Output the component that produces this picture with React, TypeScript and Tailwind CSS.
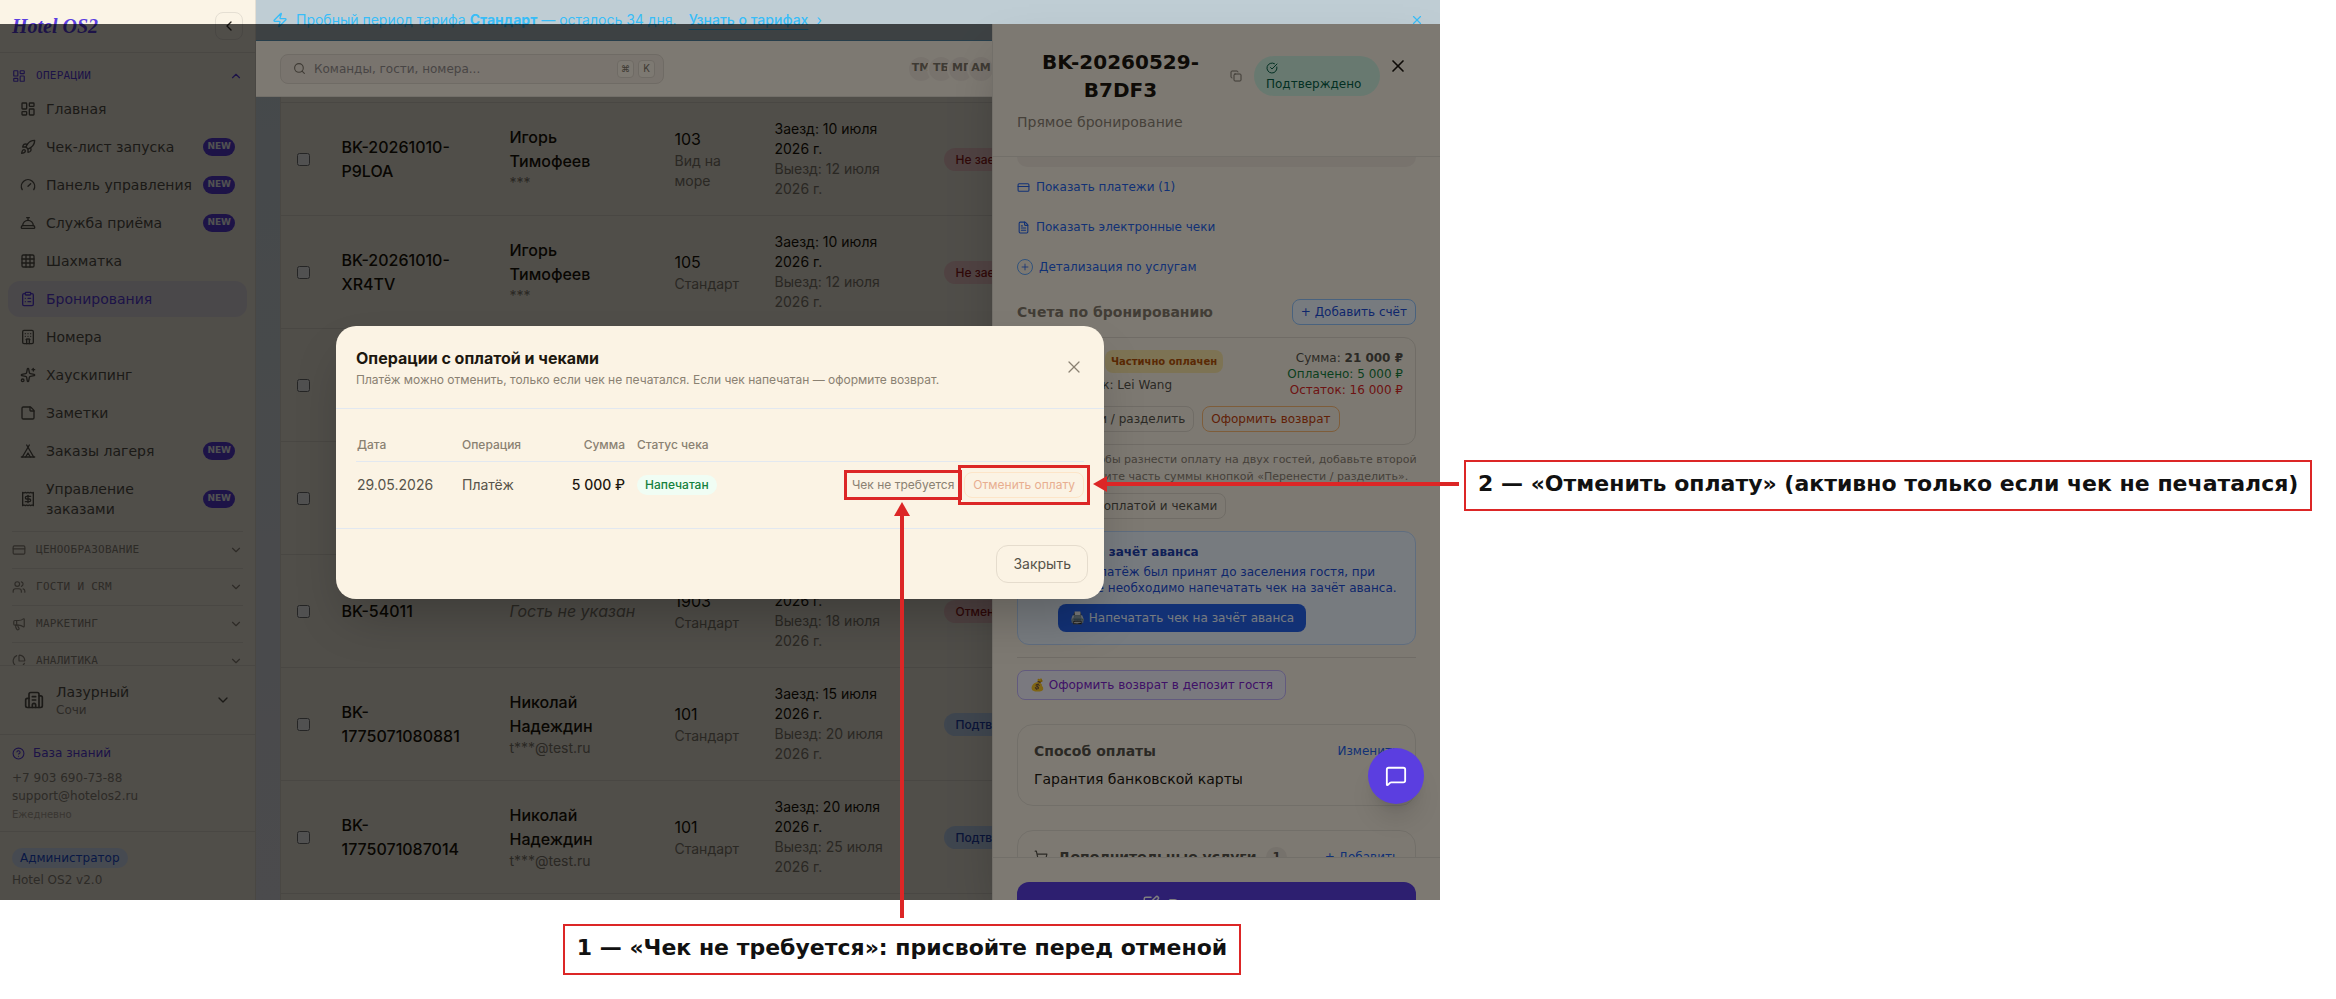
import type { ReactNode } from "react";
import {
  Building2,
  CalendarDays,
  ChartPie,
  ChevronDown,
  ChevronLeft,
  ChevronUp,
  CircleCheckBig,
  CircleHelp,
  ClipboardList,
  ConciergeBell,
  Copy,
  CreditCard,
  FileText,
  Gauge,
  Grid3x3,
  Hotel,
  LayoutDashboard,
  Megaphone,
  MessageSquare,
  Plus,
  Receipt,
  Rocket,
  Search,
  ShoppingCart,
  Sparkles,
  SquarePen,
  StickyNote,
  Tent,
  Users,
  X,
  Zap,
} from "lucide-react";

const navItems = [
  { label: "Главная", icon: LayoutDashboard },
  { label: "Чек-лист запуска", icon: Rocket, isNew: true },
  { label: "Панель управления", icon: Gauge, isNew: true },
  { label: "Служба приёма", icon: ConciergeBell, isNew: true },
  { label: "Шахматка", icon: Grid3x3 },
  { label: "Бронирования", icon: ClipboardList, active: true },
  { label: "Номера", icon: Hotel },
  { label: "Хаускипинг", icon: Sparkles },
  { label: "Заметки", icon: StickyNote },
  { label: "Заказы лагеря", icon: Tent, isNew: true },
  { label: "Управление заказами", icon: Receipt, isNew: true },
];

const sections = [
  { label: "ЦЕНООБРАЗОВАНИЕ", icon: CreditCard },
  { label: "ГОСТИ И CRM", icon: Users },
  { label: "МАРКЕТИНГ", icon: Megaphone },
  { label: "АНАЛИТИКА", icon: ChartPie },
];

type Booking = {
  id: string;
  guest?: string;
  contact?: string;
  room?: string;
  category?: string;
  from?: string;
  to?: string;
  status?: string;
  tone?: "red" | "blue";
};

const bookings: Booking[] = [
  { id: "BK-20261010-P9LOA", guest: "Игорь Тимофеев", contact: "***", room: "103", category: "Вид на море", from: "10 июля", to: "12 июля", status: "Не заехал", tone: "red" },
  { id: "BK-20261010-XR4TV", guest: "Игорь Тимофеев", contact: "***", room: "105", category: "Стандарт", from: "10 июля", to: "12 июля", status: "Не заехал", tone: "red" },
  { id: "" },
  { id: "" },
  { id: "BK-54011", room: "1903", category: "Стандарт", from: "16 июля", to: "18 июля", status: "Отменено", tone: "red" },
  { id: "BK-1775071080881", guest: "Николай Надеждин", contact: "t***@test.ru", room: "101", category: "Стандарт", from: "15 июля", to: "20 июля", status: "Подтверждено", tone: "blue" },
  { id: "BK-1775071087014", guest: "Николай Надеждин", contact: "t***@test.ru", room: "101", category: "Стандарт", from: "20 июля", to: "25 июля", status: "Подтверждено", tone: "blue" },
  { id: "" },
];

function Sidebar() {
  return (
    <aside className="flex w-64 shrink-0 flex-col border-r border-[#e5dfd3] bg-[#fbf4e6] text-[#57534a]">
      <div className="flex h-[53px] shrink-0 items-center justify-between border-b border-[#e5dfd3] px-3">
        <span className="font-['Liberation_Serif',serif] text-xl font-bold italic text-[#5b3ee0]">Hotel OS2</span>
        <button type="button" aria-label="Свернуть меню" className="flex size-7 items-center justify-center rounded-lg border border-[#e5dfd3] text-[#2b2720]">
          <ChevronLeft size={16} />
        </button>
      </div>

      <nav className="min-h-0 flex-1 overflow-hidden pt-2">
        <button type="button" className="flex h-[30px] w-full items-center gap-2.5 px-3 font-['DejaVu_Sans_Mono',monospace] text-[11px] tracking-wide text-[#5b3ee0]">
          <LayoutDashboard size={14} />
          ОПЕРАЦИИ
          <ChevronUp size={14} className="ml-auto" />
        </button>
        <ul className="flex flex-col gap-0.5 px-2">
          {navItems.map(({ label, icon: Icon, isNew, active }) => (
            <li key={label}>
              <a
                href="#"
                className={`flex items-center gap-2.5 rounded-xl px-3 py-2 text-sm leading-5 ${active ? "bg-[#e9e1ea] text-[#5b3ee0]" : ""}`}
              >
                <Icon size={16} className="shrink-0" />
                <span className="flex-1">{label}</span>
                {isNew && (
                  <span className="h-[18px] rounded-full bg-[#5b3ee0] px-1 text-[9px] leading-4 font-bold text-white">NEW</span>
                )}
              </a>
            </li>
          ))}
        </ul>
        <div className="mx-3 mt-1">
          {sections.map(({ label, icon: Icon }) => (
            <button
              key={label}
              type="button"
              className="flex h-[37px] w-full items-center gap-2.5 border-t border-[#e5dfd3] font-['DejaVu_Sans_Mono',monospace] text-[11px] tracking-wide text-[#8f877a]"
            >
              <Icon size={14} />
              {label}
              <ChevronDown size={14} className="ml-auto" />
            </button>
          ))}
        </div>
      </nav>

      <div className="flex h-[69px] shrink-0 items-center border-t border-[#e5dfd3] px-6">
        <Building2 size={20} className="mr-3" />
        <div className="flex-1">
          <div className="text-sm leading-5">Лазурный</div>
          <div className="text-xs text-[#8f877a]">Сочи</div>
        </div>
        <ChevronDown size={16} />
      </div>
      <div className="shrink-0 border-t border-[#e5dfd3] px-3 pt-2.5 pb-2 text-xs text-[#8f877a]">
        <a href="#" className="flex items-center gap-2 text-[#5b3ee0]">
          <CircleHelp size={13} />
          База знаний
        </a>
        <a href="#" className="mt-2 block leading-[18px]">+7 903 690-73-88</a>
        <a href="#" className="block leading-[18px]">support@hotelos2.ru</a>
        <div className="mt-0.5 text-[10px] leading-4 text-[#b3aa9b]">Ежедневно</div>
      </div>
      <div className="h-[69px] shrink-0 border-t border-[#e5dfd3] px-3 pt-4 text-xs text-[#8f877a]">
        <span className="inline-block rounded-full bg-[#dbeafe] px-2 py-0.5 text-[#1d4ed8]">Администратор</span>
        <div className="mt-1">Hotel OS2 v2.0</div>
      </div>
    </aside>
  );
}

function TopBar() {
  return (
    <header className="relative z-20 flex h-14 shrink-0 items-center justify-between border-b border-[#e5dfd3] bg-[#fbf3e5] px-6">
      <label className="flex h-[30px] w-full max-w-sm items-center gap-2 rounded-lg border border-[#dfd6ca] bg-[#f2e8dc] px-3 text-[#7d7568]">
        <Search size={13} />
        <input
          type="text"
          aria-label="Поиск"
          placeholder="Команды, гости, номера..."
          className="min-w-0 flex-1 bg-transparent text-xs outline-none placeholder:text-[#918b8a]"
        />
        <kbd className="-mr-1 flex h-[18px] w-[17px] items-center justify-center rounded border border-[#dfd6ca] bg-[#fbf3e5] font-[Inter,sans-serif] text-[9px]">⌘</kbd>
        <kbd className="-mr-1 flex h-[18px] w-[17px] items-center justify-center rounded border border-[#dfd6ca] bg-[#fbf3e5] font-[Inter,sans-serif] text-[10px]">K</kbd>
      </label>
      <div className="mr-[421px] flex">
        {["ТМ", "ТБ", "МГ", "АМ"].map((name) => (
          <span
            key={name}
            className="-ml-2 flex size-7 items-center justify-center rounded-full border-2 border-[#fbf3e5] bg-[#f0e6db] text-[11px] font-bold text-[#7d7568]"
          >
            {name}
          </span>
        ))}
      </div>
    </header>
  );
}

function BookingsTable() {
  return (
    <table className="w-full table-fixed border-x border-[#e5dfd3] bg-[#fbf4e6] font-[Inter,sans-serif] text-sm leading-5 text-[#1a1408]">
      <colgroup>
        <col className="w-[45px]" />
        <col className="w-[168px]" />
        <col className="w-[165px]" />
        <col className="w-[100px]" />
        <col className="w-[161px]" />
        <col />
      </colgroup>
      <tbody>
        {bookings.map((b, i) => (
          <tr key={i} className="h-[113px] border-t border-[#e5dfd3]">
            <td className="pl-4">
              <input type="checkbox" aria-label={`Выбрать ${b.id}`} className="block size-[13px]" />
            </td>
            <td className="px-4 text-base leading-6 font-medium">{b.id}</td>
            <td className="px-4">
              {b.guest && (
                <>
                  <div className="w-24 text-base leading-6 font-medium">{b.guest}</div>
                  <div className="text-[#857d70]">{b.contact}</div>
                </>
              )}
              {b.id && !b.guest && <div className="text-base leading-6 whitespace-nowrap text-[#857d70] italic">Гость не указан</div>}
            </td>
            <td className="px-4">
              <div className="text-base leading-6">{b.room}</div>
              <div className="text-[#857d70]">{b.category}</div>
            </td>
            <td className="pr-6 pl-4">
              {b.from && (
                <>
                  <div>Заезд: {b.from} 2026 г.</div>
                  <div className="text-[#857d70]">Выезд: {b.to} 2026 г.</div>
                </>
              )}
            </td>
            <td className="px-6">
              {b.status && (
                <span
                  className={`inline-block rounded-full px-3 py-1 text-xs leading-[15px] font-medium ${b.tone === "red" ? "bg-[#fbd0d0] text-[#991b1b]" : "bg-[#c6dbf8] text-[#1e40af]"}`}
                >
                  {b.status}
                </span>
              )}
            </td>
          </tr>
        ))}
      </tbody>
    </table>
  );
}

function SmallButton({ children, className }: { children: ReactNode; className: string }) {
  return (
    <button type="button" className={`h-[26px] shrink-0 rounded-lg border px-2 text-xs whitespace-nowrap ${className}`}>
      {children}
    </button>
  );
}

function BookingDrawer() {
  return (
    <aside className="absolute top-6 right-0 bottom-0 z-30 flex w-full max-w-md flex-col border-l border-[#e5dfd3] bg-[#fbf3e5] shadow-2xl">
      <div className="shrink-0 border-b border-[#e5dfd3] p-6">
        <div className="flex items-start">
          <div className="flex flex-1 items-center">
            <h2 className="flex-1 text-center text-xl leading-7 font-bold text-[#1c170f]">BK-20260529-B7DF3</h2>
            <button type="button" aria-label="Скопировать номер" className="mr-3 ml-1.5 text-[#7d7568]">
              <Copy size={12} />
            </button>
            <span className="mt-2 mb-2 w-[126px] rounded-[20px] bg-[#d1f3e0] px-3 py-1 text-xs text-[#065f46]">
              <CircleCheckBig size={12} className="mt-0.5 mb-0.5" />
              Подтверждено
            </span>
          </div>
          <button type="button" aria-label="Закрыть карточку" className="flex size-9 items-center justify-center text-[#1c170f]">
            <X size={20} />
          </button>
        </div>
        <p className="mt-2 text-sm leading-5 text-[#8c8274]">Прямое бронирование</p>
      </div>

      <div className="min-h-0 flex-1 overflow-hidden px-6">
        <div className="h-2.5 rounded-b-xl bg-[#f0e6db]" />
        <div className="mt-3 flex flex-col items-start gap-6 text-xs leading-4 text-[#2563eb]">
          <a href="#" className="flex items-center gap-1.5">
            <CreditCard size={13} />
            Показать платежи (1)
          </a>
          <a href="#" className="flex items-center gap-1.5">
            <FileText size={13} />
            Показать электронные чеки
          </a>
          <a href="#" className="flex items-center gap-1.5">
            <span className="flex size-4 items-center justify-center rounded-full border border-[#60a5fa]">
              <Plus size={10} />
            </span>
            Детализация по услугам
          </a>
        </div>

        <div className="mt-6 flex items-center justify-between">
          <h3 className="text-sm font-bold text-[#857b6c]">Счета по бронированию</h3>
          <SmallButton className="border-[#93c5fd] bg-[#eff6ff] text-[#1d4ed8]">+ Добавить счёт</SmallButton>
        </div>

        <div className="mt-3 rounded-xl border border-[#e0d9cc] p-3 text-xs leading-4 text-[#57534a]">
          <div className="flex justify-between">
            <div>
              <div className="flex h-[23px] items-center gap-2">
                <span className="w-[67px] font-bold">Счёт №1</span>
                <span className="rounded-lg bg-[#fbe7a8] px-1.5 text-[10px] leading-[23px] font-bold text-[#b45309]">Частично оплачен</span>
              </div>
              <div className="mt-1">Плательщик: Lei Wang</div>
            </div>
            <div className="text-right">
              <div>
                Сумма: <b>21 000 ₽</b>
              </div>
              <div className="text-[#15803d]">Оплачено: 5 000 ₽</div>
              <div className="text-[#dc2626]">Остаток: 16 000 ₽</div>
            </div>
          </div>
          <div className="mt-2 flex gap-2">
            <SmallButton className="border-[#e0d9cc]">Перенести / разделить</SmallButton>
            <SmallButton className="border-[#fdba74] text-[#c2410c]">Оформить возврат</SmallButton>
          </div>
        </div>
        <p className="mt-1.5 text-[11px] leading-[17px] whitespace-nowrap text-[#8c8274]">
          Подсказка: чтобы разнести оплату на двух гостей, добавьте второй
          <br />
          счёт и перенесите часть суммы кнопкой «Перенести / разделить».
        </p>
        <SmallButton className="mt-2 border-[#e0d9cc] text-[#57534a]">Операции с оплатой и чеками</SmallButton>

        <div className="mt-3 flex gap-2 rounded-xl border border-[#bfdbfe] bg-[#eff6ff] p-3 text-xs leading-4 text-[#1d4ed8]">
          <CalendarDays size={20} className="shrink-0" />
          <div>
            <h4 className="font-bold text-[#1e40af]">Чек на зачёт аванса</h4>
            <p className="mt-1 whitespace-nowrap">
              Этот платёж был принят до заселения гостя, при
              <br />
              выезде необходимо напечатать чек на зачёт аванса.
            </p>
            <button type="button" className="mt-2 h-7 rounded-lg bg-[#2563eb] px-3 whitespace-nowrap text-[#eff6ff]">
              🖨️ Напечатать чек на зачёт аванса
            </button>
          </div>
        </div>

        <div className="mt-3 border-t border-[#e0d9cc] pt-3">
          <button type="button" className="h-[30px] rounded-lg border border-[#c4b5fd] bg-[#f5f3ff] px-3 text-xs text-[#7e22ce]">
            💰 Оформить возврат в депозит гостя
          </button>
        </div>

        <div className="mt-6 rounded-2xl border border-[#e5dfd3] p-4 text-sm leading-5">
          <div className="flex items-center justify-between">
            <h3 className="font-bold text-[#57534a]">Способ оплаты</h3>
            <a href="#" className="text-xs leading-5 text-[#2563eb]">Изменить</a>
          </div>
          <p className="mt-2 text-[#1c170f]">Гарантия банковской карты</p>
        </div>

        <div className="mt-6 rounded-2xl border border-[#e5dfd3] p-4 text-sm leading-5">
          <div className="flex items-center gap-2.5">
            <ShoppingCart size={14} className="text-[#57534a]" />
            <h3 className="font-bold text-[#57534a]">Дополнительные услуги</h3>
            <span className="rounded-full bg-[#ede4d8] px-1.5 text-xs leading-5 font-bold text-[#57534a]">1</span>
            <a href="#" className="ml-auto text-xs leading-5 text-[#2563eb]">+ Добавить</a>
          </div>
        </div>
      </div>

      <div className="flex h-[43px] shrink-0 flex-col overflow-hidden border-t border-[#e5dfd3] px-6 pt-6">
        <button type="button" className="flex h-11 shrink-0 items-center justify-center gap-2 rounded-xl bg-[#5b3ee0] text-sm font-bold text-white">
          <SquarePen size={18} />
          Редактировать
        </button>
      </div>
    </aside>
  );
}

function PaymentsDialog() {
  return (
    <div role="dialog" aria-labelledby="payments-title" className="w-full max-w-3xl rounded-[20px] bg-[#fbf3e4] font-[Inter,sans-serif] shadow-2xl">
      <div className="flex items-center justify-between border-b border-slate-200 p-5">
        <div>
          <h2 id="payments-title" className="text-base leading-6 font-bold text-[#1c170f]">Операции с оплатой и чеками</h2>
          <p className="mt-0.5 text-xs leading-4 text-[#8a8172]">
            Платёж можно отменить, только если чек не печатался. Если чек напечатан — оформите возврат.
          </p>
        </div>
        <button type="button" aria-label="Закрыть окно" className="flex size-5 items-center justify-center text-[#8a8172]">
          <X size={20} strokeWidth={1.5} />
        </button>
      </div>

      <div className="p-5">
        <table className="w-full table-fixed text-left text-sm text-[#57534a]">
          <colgroup>
            <col className="w-[105px]" />
            <col className="w-[98px]" />
            <col className="w-[72px]" />
            <col className="w-[110px]" />
            <col />
          </colgroup>
          <thead>
            <tr className="h-[33px] border-b border-slate-200 text-xs text-[#8a8172]">
              <th className="pl-px font-medium">Дата</th>
              <th className="pl-px font-medium">Операция</th>
              <th className="pr-1.5 text-right font-medium">Сумма</th>
              <th className="pl-1.5 font-medium">Статус чека</th>
              <th aria-label="Действия" />
            </tr>
          </thead>
          <tbody>
            <tr className="h-[46px]">
              <td className="pl-px">29.05.2026</td>
              <td className="pl-px">Платёж</td>
              <td className="pr-1.5 text-right font-medium whitespace-nowrap text-[#1c170f]">5 000 ₽</td>
              <td className="pl-1.5">
                <span className="inline-block rounded-full bg-[#f0fdf4] px-2 text-xs leading-5 font-medium text-[#15803d]">Напечатан</span>
              </td>
              <td>
                <div className="flex items-center justify-end gap-2.5">
                  <span className="relative">
                    <button type="button" className="block text-xs text-[#8a8172]">Чек не требуется</button>
                    <span className="pointer-events-none absolute -inset-x-2 -inset-y-[7px] border-3 border-[#dc2626]" />
                  </span>
                  <span className="relative">
                    <button type="button" disabled className="block h-[26px] rounded-lg border border-[#fde5c8] px-2 text-xs text-[#e8ae90]">
                      Отменить оплату
                    </button>
                    <span className="pointer-events-none absolute -inset-x-1.5 -inset-y-[7px] border-3 border-[#dc2626]" />
                  </span>
                </div>
              </td>
            </tr>
          </tbody>
        </table>
      </div>

      <div className="flex justify-end border-t border-slate-200 p-4">
        <button type="button" className="h-[38px] rounded-xl border border-[#e5dccd] px-4 text-sm text-[#57534a]">Закрыть</button>
      </div>
    </div>
  );
}

function Callout({ children }: { children: ReactNode }) {
  return (
    <p className="border-2 border-[#dc2626] bg-white px-3 pt-2 pb-3 text-[22px] leading-[27px] font-bold whitespace-nowrap text-[#111111]">
      {children}
    </p>
  );
}

export default function App() {
  return (
    <div className="flex h-screen flex-col overflow-hidden bg-white font-['DejaVu_Sans',sans-serif]">
      <div className="grid min-h-0 flex-1 grid-cols-[1440fr_896fr] grid-rows-1">
        <div className="relative min-h-0">
          <div className="relative flex h-full overflow-hidden">
            <Sidebar />
            <div className="flex min-w-0 flex-1 flex-col bg-linear-to-b from-[#d8e6ea] to-[#ecebf1]">
              <div className="flex h-[41px] shrink-0 items-center gap-2 border-b border-[#7cc4ec] bg-[#bfcdd4] px-4 font-[Inter,sans-serif] text-sm text-[#38bdf8]">
                <Zap size={16} />
                <span>
                  Пробный период тарифа <b>Стандарт</b> — осталось 34 дня.
                </span>
                <a href="#" className="ml-1 font-medium underline underline-offset-4">Узнать о тарифах</a>
                <span>›</span>
                <button type="button" aria-label="Скрыть" className="ml-auto">
                  <X size={14} />
                </button>
              </div>
              <TopBar />
              <main className="min-h-0 flex-1 overflow-hidden px-6">
                <div className="h-[5px] border-x border-[#e5dfd3] bg-[#fbf4e6]" />
                <BookingsTable />
              </main>
            </div>

            <div className="absolute inset-x-0 top-6 bottom-0 z-10 bg-black/36" />
            <BookingDrawer />
            <div className="absolute inset-x-0 top-6 bottom-0 z-40 flex items-center justify-center bg-black/50">
              <PaymentsDialog />
            </div>
            <button
              type="button"
              aria-label="Открыть чат"
              className="absolute right-4 bottom-24 z-50 flex size-14 items-center justify-center rounded-full bg-[#5b3ee0] text-white shadow-xl"
            >
              <MessageSquare size={22} />
            </button>
          </div>

          {/* pointers from the callouts to the dialog buttons */}
          <div className="absolute top-[calc(50%+52px)] -bottom-[18px] left-[calc(50%+174px)] z-50 flex flex-col items-center">
            <svg width="16" height="14" viewBox="0 0 16 14" className="shrink-0 fill-[#dc2626]">
              <path d="M8 0 16 14H0z" />
            </svg>
            <span className="w-1 flex-1 bg-[#dc2626]" />
          </div>
          <div className="absolute top-[calc(50%+26px)] -right-[19px] left-[calc(50%+373px)] z-50 flex items-center">
            <svg width="14" height="16" viewBox="0 0 14 16" className="shrink-0 fill-[#dc2626]">
              <path d="M0 8 14 0V16z" />
            </svg>
            <span className="h-1 flex-1 bg-[#dc2626]" />
          </div>
        </div>

        <div className="flex items-center pt-[70px] pl-6">
          <Callout>2 — «Отменить оплату» (активно только если чек не печатался)</Callout>
        </div>
      </div>

      <div className="grid shrink-0 grid-cols-[1440fr_896fr]">
        <div className="flex justify-center pt-6 pb-6 pl-[364px]">
          <Callout>1 — «Чек не требуется»: присвойте перед отменой</Callout>
        </div>
      </div>
    </div>
  );
}
